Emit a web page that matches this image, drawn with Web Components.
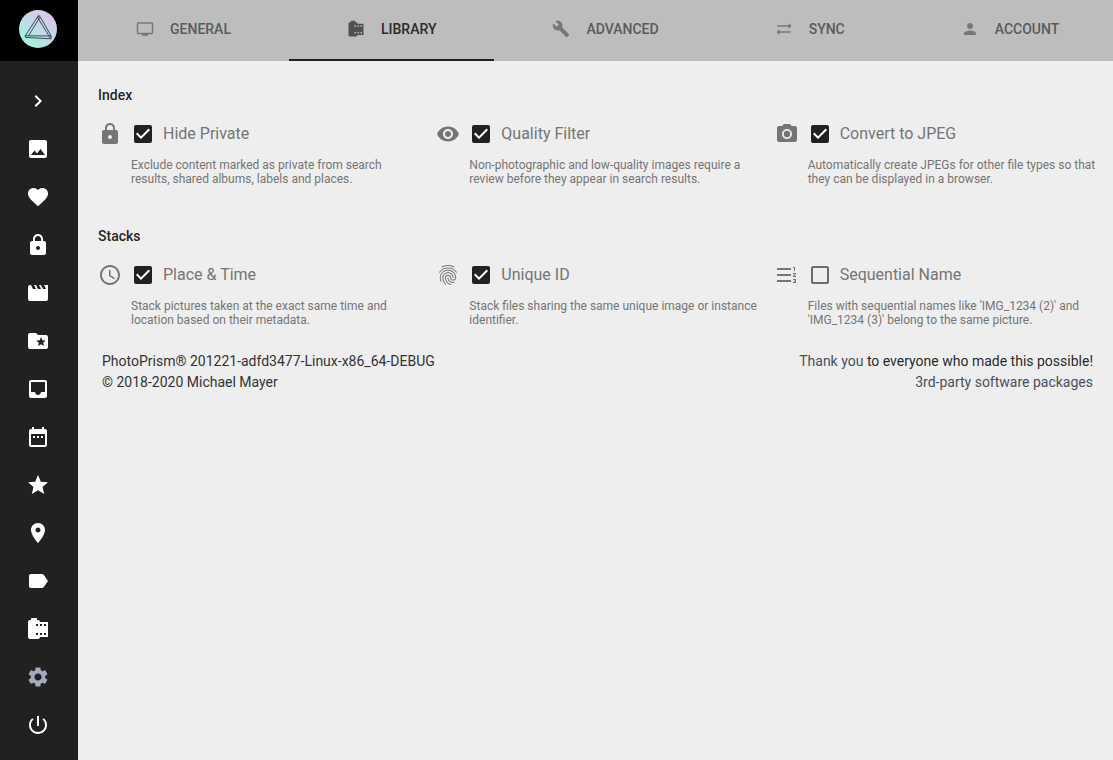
<!DOCTYPE html>
<html lang="en">
<head>
<meta charset="utf-8">
<meta name="viewport" content="width=device-width, initial-scale=1">
<title>PhotoPrism: Settings</title>
<style>
  html, body { margin: 0; }
  body {
    background: #eeeeee;
    color: rgba(0, 0, 0, .87);
    font: 14px/21px Roboto, "Noto Sans", sans-serif;
  }
</style>
</head>
<body>
<settings-page></settings-page>

<script>
const ICONS = {
  chevron: 'M10 6L8.59 7.41 13.17 12l-4.58 4.59L10 18l6-6z',
  image: 'M21 19V5c0-1.1-.9-2-2-2H5c-1.1 0-2 .9-2 2v14c0 1.1.9 2 2 2h14c1.1 0 2-.9 2-2zM8.5 13.5l2.5 3.01L14.5 12l4.5 6H5l3.5-4.5z',
  heart: 'M12 21.35l-1.45-1.32C5.4 15.36 2 12.28 2 8.5 2 5.42 4.42 3 7.5 3c1.74 0 3.41.81 4.5 2.09C13.09 3.81 14.76 3 16.5 3 19.58 3 22 5.42 22 8.5c0 3.78-3.4 6.86-8.55 11.54L12 21.35z',
  lock: 'M18 8h-1V6c0-2.76-2.24-5-5-5S7 3.24 7 6v2H6c-1.1 0-2 .9-2 2v10c0 1.1.9 2 2 2h12c1.1 0 2-.9 2-2V10c0-1.1-.9-2-2-2zm-6 9c-1.1 0-2-.9-2-2s.9-2 2-2 2 .9 2 2-.9 2-2 2zm3.1-9H8.9V6c0-1.71 1.39-3.1 3.1-3.1 1.71 0 3.1 1.39 3.1 3.1v2z',
  movie: 'M18 4l2 4h-3l-2-4h-2l2 4h-3l-2-4H8l2 4H7L5 4H4c-1.1 0-1.99.9-1.99 2L2 18c0 1.1.9 2 2 2h16c1.1 0 2-.9 2-2V4h-4z',
  folder: 'M20 6h-8l-2-2H4c-1.1 0-2 .9-2 2v12c0 1.1.9 2 2 2h16c1.1 0 2-.9 2-2V8c0-1.1-.9-2-2-2zm-2.06 11L15 15.28 12.06 17l.78-3.33-2.59-2.24 3.41-.29L15 8l1.34 3.14 3.41.29-2.59 2.24.78 3.33z',
  inbox: 'M19 3H4.99c-1.11 0-1.98.89-1.98 2L3 19c0 1.1.88 2 1.99 2H19c1.1 0 2-.9 2-2V5c0-1.11-.9-2-2-2zm0 12h-4c0 1.66-1.35 3-3 3s-3-1.34-3-3H4.99V5H19v10z',
  calendar: 'M9 11H7v2h2v-2zm4 0h-2v2h2v-2zm4 0h-2v2h2v-2zm2-7h-1V2h-2v2H8V2H6v2H5c-1.11 0-1.99.9-1.99 2L3 20c0 1.1.89 2 2 2h14c1.1 0 2-.9 2-2V6c0-1.1-.9-2-2-2zm0 16H5V9h14v11z',
  star: 'M12 17.27L18.18 21l-1.64-7.03L22 9.24l-7.19-.61L12 2 9.19 8.63 2 9.24l5.46 4.73L5.82 21z',
  place: 'M12 2C8.13 2 5 5.13 5 9c0 5.25 7 13 7 13s7-7.75 7-13c0-3.87-3.13-7-7-7zm0 9.5c-1.38 0-2.5-1.12-2.5-2.5s1.12-2.5 2.5-2.5 2.5 1.12 2.5 2.5-1.12 2.5-2.5 2.5z',
  label: 'M17.63 5.84C17.27 5.33 16.67 5 16 5L5 5.01C3.9 5.01 3 5.9 3 7v10c0 1.1.9 1.99 2 1.99L16 19c.67 0 1.27-.33 1.63-.84L22 12l-4.37-6.16z',
  roll: 'M14 5c0-1.1-.9-2-2-2h-1V2c0-.55-.45-1-1-1H6c-.55 0-1 .45-1 1v1H4c-1.1 0-2 .9-2 2v15c0 1.1.9 2 2 2h8c1.1 0 2-.9 2-2h8V5h-8zm-2 13h-2v-2h2v2zm0-9h-2V7h2v2zm4 9h-2v-2h2v2zm0-9h-2V7h2v2zm4 9h-2v-2h2v2zm0-9h-2V7h2v2z',
  settings: 'M19.14 12.94c.04-.3.06-.61.06-.94 0-.32-.02-.64-.07-.94l2.03-1.58c.18-.14.23-.41.12-.61l-1.92-3.32c-.12-.22-.37-.29-.59-.22l-2.39.96c-.5-.38-1.03-.7-1.62-.94l-.36-2.54c-.04-.24-.24-.41-.48-.41h-3.84c-.24 0-.43.17-.47.41l-.36 2.54c-.59.24-1.13.57-1.62.94l-2.39-.96c-.22-.08-.47 0-.59.22L2.74 8.87c-.12.21-.08.47.12.61l2.03 1.58c-.05.3-.09.63-.09.94s.02.64.07.94l-2.03 1.58c-.18.14-.23.41-.12.61l1.92 3.32c.12.22.37.29.59.22l2.39-.96c.5.38 1.03.7 1.62.94l.36 2.54c.05.24.24.41.48.41h3.84c.24 0 .44-.17.47-.41l.36-2.54c.59-.24 1.13-.56 1.62-.94l2.39.96c.22.08.47 0 .59-.22l1.92-3.32c.12-.22.07-.47-.12-.61l-2.01-1.58zM12 15.6c-1.98 0-3.6-1.62-3.6-3.6s1.62-3.6 3.6-3.6 3.6 1.62 3.6 3.6-1.62 3.6-3.6 3.6z',
  power: 'M13 3h-2v10h2V3zm4.83 2.17l-1.42 1.42C17.99 7.86 19 9.81 19 12c0 3.87-3.13 7-7 7s-7-3.13-7-7c0-2.19 1.01-4.14 2.58-5.42L6.17 5.17C4.23 6.82 3 9.26 3 12c0 4.97 4.03 9 9 9s9-4.03 9-9c0-2.74-1.23-5.18-3.17-6.83z',
  tv: 'M21 3H3c-1.1 0-2 .9-2 2v12c0 1.1.9 2 2 2h5v2h8v-2h5c1.1 0 1.99-.9 1.99-2L23 5c0-1.1-.9-2-2-2zm0 14H3V5h18v12z',
  build: 'M22.7 19l-9.1-9.1c.9-2.3.4-5-1.5-6.9-2-2-5-2.4-7.4-1.3L9 6 6 9 1.6 4.7C.4 7.1.9 10.1 2.9 12.1c1.9 1.9 4.6 2.4 6.9 1.5l9.1 9.1c.4.4 1 .4 1.4 0l2.3-2.3c.5-.4.5-1.1.1-1.4z',
  sync: 'M22 8l-4-4v3H3v2h15v3l4-4zM2 16l4 4v-3h15v-2H6v-3l-4 4z',
  person: 'M12 12c2.21 0 4-1.79 4-4s-1.79-4-4-4-4 1.79-4 4 1.79 4 4 4zm0 2c-2.67 0-8 1.34-8 4v2h16v-2c0-2.66-5.33-4-8-4z',
  eye: 'M12 4.5C7 4.5 2.73 7.61 1 12c1.73 4.39 6 7.5 11 7.5s9.27-3.11 11-7.5c-1.73-4.39-6-7.5-11-7.5zM12 17c-2.76 0-5-2.24-5-5s2.24-5 5-5 5 2.24 5 5-2.24 5-5 5zm0-8c-1.66 0-3 1.34-3 3s1.34 3 3 3 3-1.34 3-3-1.34-3-3-3z',
  camera: 'M12 8.8a3.2 3.2 0 1 0 0 6.4 3.2 3.2 0 1 0 0-6.4zM9 2L7.17 4H4c-1.1 0-2 .9-2 2v12c0 1.1.9 2 2 2h16c1.1 0 2-.9 2-2V6c0-1.1-.9-2-2-2h-3.17L15 2H9zm3 15c-2.76 0-5-2.24-5-5s2.24-5 5-5 5 2.24 5 5-2.24 5-5 5z',
  clock: 'M11.99 2C6.47 2 2 6.48 2 12s4.47 10 9.99 10C17.52 22 22 17.52 22 12S17.52 2 11.99 2zM12 20c-4.42 0-8-3.58-8-8s3.58-8 8-8 8 3.58 8 8-3.58 8-8 8zM12.5 7H11v6l5.25 3.15.75-1.23-4.5-2.67z',
  fingerprint: 'M17.81 4.47c-.08 0-.16-.02-.23-.06C15.66 3.42 14 3 12.01 3c-1.98 0-3.86.47-5.57 1.41-.24.13-.54.04-.68-.2-.13-.24-.04-.55.2-.68C7.82 2.52 9.86 2 12.01 2c2.13 0 3.99.47 6.03 1.52.25.13.34.43.21.67-.09.18-.26.28-.44.28zM3.5 9.72c-.1 0-.2-.03-.29-.09-.23-.16-.28-.47-.12-.7.99-1.4 2.25-2.5 3.75-3.27C9.98 4.04 14 4.03 17.15 5.65c1.5.77 2.76 1.86 3.75 3.25.16.22.11.54-.12.7-.23.16-.54.11-.7-.12-.9-1.26-2.04-2.25-3.39-2.94-2.87-1.47-6.54-1.47-9.4.01-1.36.7-2.5 1.7-3.4 2.96-.08.14-.23.21-.39.21zm6.25 12.07c-.13 0-.26-.05-.35-.15-.87-.87-1.34-1.43-2.01-2.64-.69-1.23-1.05-2.73-1.05-4.34 0-2.97 2.54-5.39 5.66-5.39s5.66 2.42 5.66 5.39c0 .28-.22.5-.5.5s-.5-.22-.5-.5c0-2.42-2.09-4.39-4.66-4.39-2.57 0-4.66 1.97-4.66 4.39 0 1.44.32 2.77.93 3.85.64 1.15 1.08 1.64 1.85 2.42.19.2.19.51 0 .71-.11.1-.24.15-.37.15zm7.17-1.85c-1.19 0-2.24-.3-3.1-.89-1.49-1.01-2.38-2.65-2.38-4.39 0-.28.22-.5.5-.5s.5.22.5.5c0 1.41.72 2.74 1.94 3.56.71.48 1.54.71 2.54.71.24 0 .64-.03 1.04-.1.27-.05.53.13.58.41.05.27-.13.53-.41.58-.57.11-1.07.12-1.21.12zM14.91 22c-.04 0-.09-.01-.13-.02-1.59-.44-2.63-1.03-3.72-2.1-1.4-1.39-2.17-3.24-2.17-5.22 0-1.62 1.38-2.94 3.08-2.94 1.7 0 3.08 1.32 3.08 2.94 0 1.07.93 1.94 2.08 1.94s2.08-.87 2.08-1.94c0-3.77-3.25-6.83-7.25-6.83-2.84 0-5.44 1.58-6.61 4.03-.39.81-.59 1.76-.59 2.8 0 .78.07 2.01.67 3.61.1.26-.03.55-.29.64-.26.1-.55-.04-.64-.29-.49-1.31-.73-2.61-.73-3.96 0-1.2.23-2.29.68-3.24 1.33-2.79 4.28-4.6 7.51-4.6 4.55 0 8.25 3.51 8.25 7.83 0 1.62-1.38 2.94-3.08 2.94s-3.08-1.32-3.08-2.94c0-1.07-.93-1.94-2.08-1.94s-2.08.87-2.08 1.94c0 1.71.66 3.31 1.87 4.51.95.94 1.86 1.46 3.27 1.85.27.07.42.35.35.61-.05.23-.26.38-.47.38z',
  numbered: 'M18 17h2v.5h-1v1h1v.5h-2v1h3v-4h-3v1zm1-9h1V4h-2v1h1v3zm-1 3h1.8L18 13.1v.9h3v-1h-1.8l1.8-2.1V10h-3v1zM2 5v2h14V5H2zm0 14h14v-2H2v2zm0-6h14v-2H2v2z'
};

/* Renders its template into an open shadow root. */
class BaseElement extends HTMLElement {
  connectedCallback() {
    if (this.shadowRoot) return;
    const tpl = document.createElement('template');
    tpl.innerHTML = this.template();
    this.attachShadow({ mode: 'open' }).append(tpl.content.cloneNode(true));
  }
}

customElements.define('md-icon', class extends BaseElement {
  template() {
    return `
      <style>
        :host { display: block; flex: none; width: 24px; height: 24px; }
        svg { display: block; width: 100%; height: 100%; fill: currentColor; }
      </style>
      <svg viewBox="0 0 24 24" aria-hidden="true"><path d="${ICONS[this.getAttribute('name')]}"/></svg>`;
  }
});

customElements.define('app-logo', class extends BaseElement {
  template() {
    return `
      <style>
        :host { display: block; width: 38px; height: 38px; }
        svg { display: block; width: 100%; height: 100%; }
      </style>
      <svg viewBox="0 0 38 38" role="img" aria-label="PhotoPrism">
        <defs>
          <linearGradient id="g" x1=".15" y1=".9" x2=".8" y2=".1">
            <stop offset="0" stop-color="#a6f2d8"/>
            <stop offset=".5" stop-color="#bedce6"/>
            <stop offset="1" stop-color="#dac6ec"/>
          </linearGradient>
        </defs>
        <circle cx="19" cy="19" r="19" fill="url(#g)"/>
        <g fill="none" stroke="#2b3a44" stroke-width=".9" stroke-linejoin="round">
          <path d="M19.6 5.4L6.2 25.8l.3 1.6L31.8 28.8l.4-2.8L21 6.6z"/>
          <path d="M21 7.2L9.4 25.8M6.2 25.8l26 .2M19.6 5.4L18.9 8l12.9 20.8"/>
        </g>
      </svg>`;
  }
});

customElements.define('nav-rail', class extends BaseElement {
  template() {
    const items = [
      ['image', 'Photos'], ['heart', 'Favorites'], ['lock', 'Private'], ['movie', 'Videos'],
      ['folder', 'Albums'], ['inbox', 'Archive'], ['calendar', 'Calendar'], ['star', 'Moments'],
      ['place', 'Places'], ['label', 'Labels'], ['roll', 'Library'], ['settings', 'Settings'], ['power', 'Logout']
    ];
    return `
      <style>
        :host {
          display: flex; flex-direction: column; box-sizing: border-box;
          padding-bottom: 8px; background: #212121; color: #fff;
        }
        .brand {
          box-sizing: border-box; height: 61px; padding: 10px 2px 0 0;
          display: flex; justify-content: center; align-items: flex-start; background: #000;
        }
        nav { display: flex; flex-direction: column; padding: 16px 2px 0 0; }
        nav a, button {
          display: flex; align-items: center; justify-content: center;
          height: 48px; padding: 0; border: 0; background: none; color: inherit;
        }
        nav a[aria-current] { color: #9fadba; }
      </style>
      <a class="brand" href="#home" aria-label="Home"><app-logo></app-logo></a>
      <nav aria-label="Main">
        <button type="button" aria-label="Expand menu"><md-icon name="chevron"></md-icon></button>
        ${items.map(([icon, name]) => `<a href="#${name.toLowerCase()}" aria-label="${name}"${icon === 'settings' ? ' aria-current="page"' : ''}><md-icon name="${icon}"></md-icon></a>`).join('')}
      </nav>`;
  }
});

customElements.define('nav-tab', class extends BaseElement {
  template() {
    return `
      <style>
        :host { display: block; flex: 1 0 auto; }
        a {
          display: flex; align-items: center; justify-content: center; gap: 16px;
          box-sizing: border-box; height: 61px; padding: 0 58px 2px; border-bottom: 2px solid transparent;
          color: #5b5b5b; text-decoration: none; text-transform: uppercase;
          font-weight: 500; line-height: 20px;
        }
        md-icon { width: 18px; height: 18px; color: #777; }
        :host([active]) a { color: #2b2b2b; border-color: #212121; }
        :host([active]) md-icon { color: #505050; }
      </style>
      <a href="#tab"${this.hasAttribute('active') ? ' aria-current="page"' : ''}>
        <md-icon name="${this.getAttribute('icon')}"></md-icon><slot></slot>
      </a>`;
  }
});

/* Tabs keep their padding; the bar scrolls sideways when they do not fit. */
customElements.define('tab-bar', class extends BaseElement {
  template() {
    return `
      <style>
        :host { display: flex; overflow-x: auto; scrollbar-width: none; background: #bdbdbd; }
      </style>
      <slot></slot>`;
  }
});

customElements.define('setting-option', class extends BaseElement {
  template() {
    return `
      <style>
        :host {
          display: grid; grid-template-columns: 24px 1fr; column-gap: 9px; row-gap: 12px;
          padding-right: 16px; color: #757575;
        }
        label { display: flex; align-items: center; gap: 8px; font-size: 16px; line-height: 24px; }
        .box { display: grid; place-items: center; width: 24px; height: 24px; }
        .box > * { grid-area: 1 / 1; }
        input {
          appearance: none; box-sizing: border-box; width: 18px; height: 18px; margin: 0;
          border: 2px solid #6b6b6b; border-radius: 2px;
        }
        input:checked { background: #212121; border-color: #212121; }
        svg { width: 24px; height: 24px; fill: #fff; pointer-events: none; visibility: hidden; }
        input:checked + svg { visibility: visible; }
        p { grid-column: 2; margin: 0; font-size: 12px; line-height: 14px; }
      </style>
      <md-icon name="${this.getAttribute('icon')}"></md-icon>
      <label for="opt">
        <span class="box">
          <input id="opt" type="checkbox" aria-describedby="hint"${this.hasAttribute('checked') ? ' checked' : ''}>
          <svg viewBox="0 0 24 24" aria-hidden="true"><path d="M10 17l-5-5 1.41-1.41L10 14.17l7.59-7.59L19 8z"/></svg>
        </span>
        ${this.getAttribute('label')}
      </label>
      <p id="hint"><slot></slot></p>`;
  }
});

customElements.define('setting-group', class extends BaseElement {
  template() {
    return `
      <style>
        :host { display: block; }
        h2 { margin: 0 0 17px; font-size: 14px; font-weight: 500; line-height: 20px; }
        .options { display: grid; grid-template-columns: repeat(3, 1fr); }
      </style>
      <section>
        <h2>${this.getAttribute('heading')}</h2>
        <div class="options"><slot></slot></div>
      </section>`;
  }
});

customElements.define('about-footer', class extends BaseElement {
  template() {
    return `
      <style>
        :host { display: block; }
        footer { display: flex; justify-content: space-between; padding: 0 20px 0 4px; }
        .version { color: #333; }
        .thanks { text-align: right; }
        a { color: #455160; text-decoration: none; }
      </style>
      <footer>
        <div class="version">PhotoPrism® 201221-adfd3477-Linux-x86_64-DEBUG<br>© 2018-2020 Michael Mayer</div>
        <div class="thanks"><a href="#thanks">Thank you</a> to everyone who made this possible!<br><a href="#notice">3rd-party software packages</a></div>
      </footer>`;
  }
});

customElements.define('settings-page', class extends BaseElement {
  template() {
    return `
      <style>
        :host { display: grid; grid-template-columns: 78px minmax(0, 1fr); min-height: 100vh; }
        main { display: flex; flex-direction: column; padding: 24px 0 24px 20px; }
        setting-group { margin-bottom: 40px; }
        setting-group:last-of-type { margin-bottom: 24px; }
      </style>
      <nav-rail></nav-rail>
      <div>
        <tab-bar role="navigation" aria-label="Settings">
          <nav-tab icon="tv">General</nav-tab>
          <nav-tab icon="roll" active>Library</nav-tab>
          <nav-tab icon="build">Advanced</nav-tab>
          <nav-tab icon="sync">Sync</nav-tab>
          <nav-tab icon="person">Account</nav-tab>
        </tab-bar>
        <main>
          <setting-group heading="Index">
            <setting-option icon="lock" label="Hide Private" checked>Exclude content marked as private from search results, shared albums, labels and places.</setting-option>
            <setting-option icon="eye" label="Quality Filter" checked>Non-photographic and low-quality images require a review before they appear in search results.</setting-option>
            <setting-option icon="camera" label="Convert to JPEG" checked>Automatically create JPEGs for other file types so that they can be displayed in a browser.</setting-option>
          </setting-group>
          <setting-group heading="Stacks">
            <setting-option icon="clock" label="Place &amp; Time" checked>Stack pictures taken at the exact same time and location based on their metadata.</setting-option>
            <setting-option icon="fingerprint" label="Unique ID" checked>Stack files sharing the same unique image or instance identifier.</setting-option>
            <setting-option icon="numbered" label="Sequential Name">Files with sequential names like 'IMG_1234 (2)' and 'IMG_1234 (3)' belong to the same picture.</setting-option>
          </setting-group>
          <about-footer></about-footer>
        </main>
      </div>`;
  }
});
</script>
</body>
</html>
